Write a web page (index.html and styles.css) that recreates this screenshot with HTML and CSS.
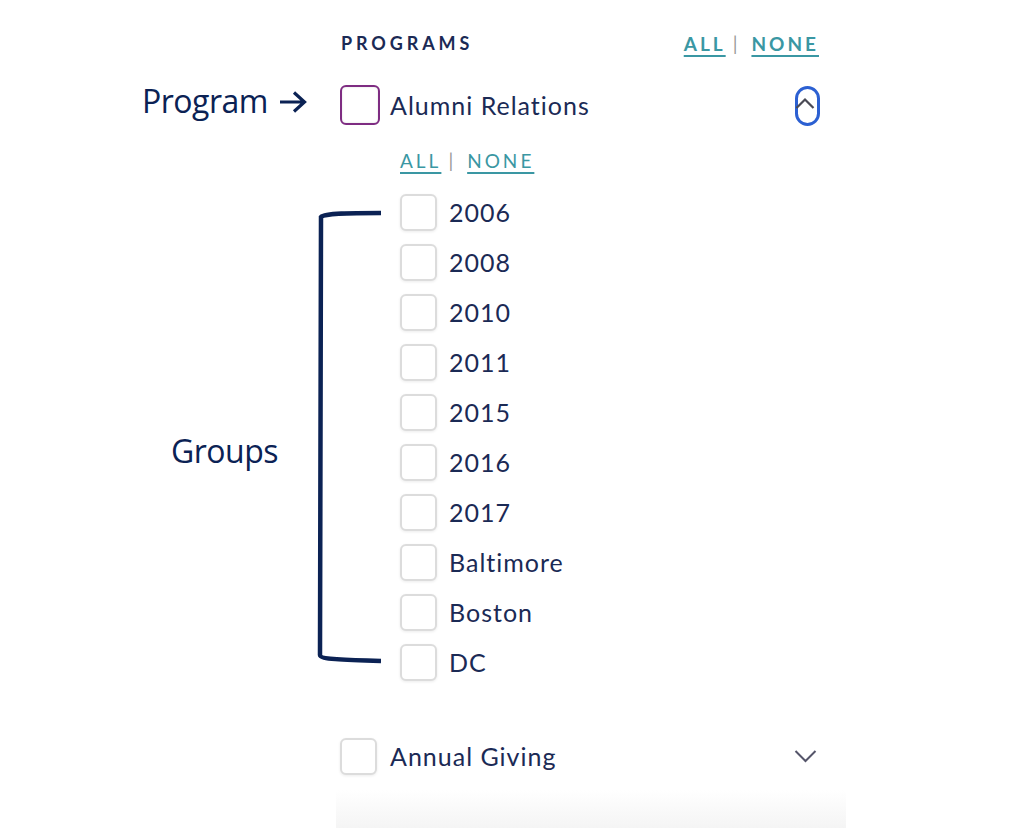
FILE: index.html
```html
<!DOCTYPE html>
<html lang="en">

<head>
    <meta charset="UTF-8">
    <meta name="viewport" content="width=device-width, initial-scale=1.0">
    <title>Programs Filter</title>
    <link rel="stylesheet" href="styles.css">
</head>

<body>
    <div class="stage">
        <!-- annotations drawn over the screenshot -->
        <div class="note note-program">
            Program
            <svg class="arrow" width="30" height="24" viewBox="0 0 30 24">
                <path d="M2 12 H26 M16 2.5 L26.5 12 L16 21.5" fill="none" stroke="#0b2254" stroke-width="3.2" />
            </svg>
        </div>
        <div class="note note-groups">Groups</div>
        <svg class="bracket" width="80" height="470" viewBox="0 0 80 470">
            <path d="M70 10 C40 10 14 10 10 14 L9 452 C9 456 30 457 70 458" fill="none" stroke="#0b2254" stroke-width="4.5" />
        </svg>

        <div class="filter-panel">
            <div class="panel-header">
                <span class="panel-title">PROGRAMS</span>
                <span class="select-links">
                    <a href="#">ALL</a><span class="sep">|</span><a href="#">NONE</a>
                </span>
            </div>

            <div class="program-row">
                <span class="checkbox checkbox-focus"></span>
                <span class="program-name">Alumni Relations</span>
                <button class="toggle toggle-open" type="button">
                    <svg width="22" height="14" viewBox="0 0 22 14">
                        <polyline points="1.5,12 10,3.5 18.5,12" fill="none" stroke="#4a4a55" stroke-width="2.2" />
                    </svg>
                </button>
            </div>

            <div class="group-block">
                <div class="select-links sub-links">
                    <a href="#">ALL</a><span class="sep">|</span><a href="#">NONE</a>
                </div>
                <ul class="group-list">
                    <li><span class="checkbox small"></span>2006</li>
                    <li><span class="checkbox small"></span>2008</li>
                    <li><span class="checkbox small"></span>2010</li>
                    <li><span class="checkbox small"></span>2011</li>
                    <li><span class="checkbox small"></span>2015</li>
                    <li><span class="checkbox small"></span>2016</li>
                    <li><span class="checkbox small"></span>2017</li>
                    <li><span class="checkbox small"></span>Baltimore</li>
                    <li><span class="checkbox small"></span>Boston</li>
                    <li><span class="checkbox small"></span>DC</li>
                </ul>
            </div>

            <div class="program-row closed">
                <span class="checkbox small"></span>
                <span class="program-name">Annual Giving</span>
                <button class="toggle" type="button">
                    <svg width="24" height="14" viewBox="0 0 24 14">
                        <polyline points="1.5,2 11.5,12 21.5,2" fill="none" stroke="#55556a" stroke-width="2" />
                    </svg>
                </button>
            </div>

            <div class="panel-fade"></div>
        </div>
    </div>
</body>

</html>
```

FILE: styles.css
```css
body {
    margin: 0;
    background-color: #fff;
    font-family: Lato, "Open Sans", sans-serif;
    color: #1b2a55;
}

.stage {
    position: relative;
    width: 1024px;
    height: 828px;
    overflow: hidden;
}

.note {
    position: absolute;
    font-family: "Open Sans", "Noto Sans", sans-serif;
    font-size: 32px;
    color: #0b2254;
    letter-spacing: -0.5px;
}

.note-program {
    display: flex;
    align-items: center;
    left: 142px;
    top: 79px;
}

.note-program .arrow {
    margin-left: 10px;
    margin-top: 3px;
}

.note-groups {
    left: 171px;
    top: 429px;
}

.bracket {
    position: absolute;
    left: 311px;
    top: 203px;
}

.filter-panel {
    margin-left: 330px;
    width: 518px;
    padding-top: 30px;
}

.panel-header {
    display: flex;
    justify-content: space-between;
    align-items: center;
    height: 26px;
    padding: 0 29px 0 11px;
}

.panel-title {
    font-size: 18px;
    font-weight: 700;
    letter-spacing: 3.9px;
    color: #1b2a55;
}

.select-links {
    font-size: 19px;
    letter-spacing: 3px;
}

.select-links a {
    color: #3a97a3;
    text-decoration: underline;
    text-decoration-thickness: 2px;
    text-underline-offset: 4px;
}

.panel-header .select-links a {
    font-weight: 700;
}

.sep {
    color: #9a9a9a;
    margin: 0 11px 0 7px;
}

.program-row {
    display: flex;
    align-items: center;
    height: 40px;
    margin-top: 29px;
    padding: 0 28px 0 10px;
}

.program-name {
    flex: 1;
    font-size: 25px;
    letter-spacing: 1px;
    margin-left: 10px;
}

.checkbox {
    width: 36px;
    height: 36px;
    border: 2px solid #dcdcdc;
    border-radius: 6px;
    box-shadow: 0 1px 3px rgba(0, 0, 0, 0.08);
    background-color: #fff;
    flex: none;
}

.checkbox.small {
    width: 33px;
    height: 33px;
}

.checkbox-focus {
    border-color: #7e2c82;
    box-shadow: inset 0 0 2px rgba(0, 0, 0, 0.15);
}

.toggle {
    border: none;
    background: none;
    padding: 0;
    width: 25px;
    height: 40px;
    display: flex;
    justify-content: center;
    align-items: center;
    cursor: pointer;
}

.toggle-open {
    box-sizing: border-box;
    border: 3px solid #2c60d2;
    border-radius: 13px;
    align-items: flex-start;
    padding-top: 7px;
    margin-top: 2px;
}

.toggle-open svg {
    margin-left: -4px;
}

.group-block {
    padding-left: 70px;
    margin-top: 24px;
}

.sub-links {
    height: 24px;
    line-height: 24px;
}

.group-list {
    list-style-type: none;
    margin: 14px 0 0;
    padding: 0;
}

.group-list li {
    display: flex;
    align-items: center;
    height: 50px;
    font-size: 25px;
    letter-spacing: 1px;
}

.group-list .checkbox {
    margin-right: 12px;
}

.program-row.closed {
    margin-top: 49px;
}

.program-row.closed .program-name {
    margin-left: 13px;
}

.program-row.closed .toggle {
    margin-right: 2px;
}

.panel-fade {
    height: 40px;
    margin: 14px 2px 0 6px;
    background: linear-gradient(#fff, #f4f4f4);
}
```
